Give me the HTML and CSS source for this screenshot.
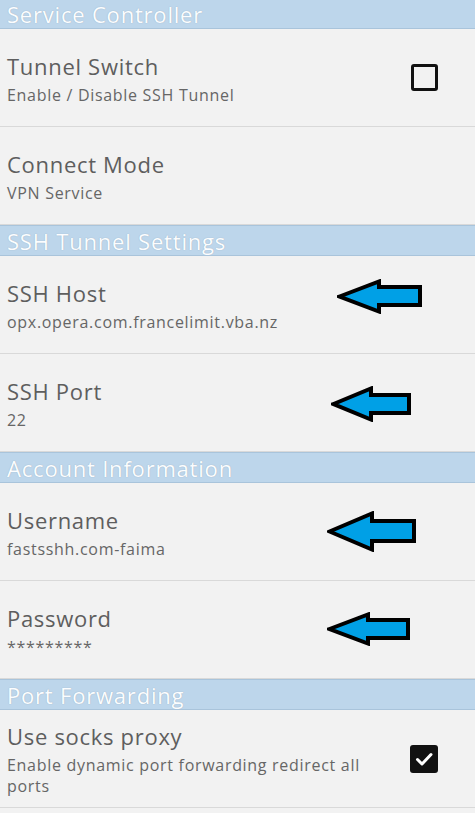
FILE: index.html
```html
<!DOCTYPE html>
<html>
<head>
<meta charset="utf-8">
<link rel="stylesheet" href="styles.css">
</head>
<body>
<div class="list">
  <div class="cat first">Service Controller</div>
  <div class="row">
    <div class="texts">
      <div class="title">Tunnel Switch</div>
      <div class="summary">Enable / Disable SSH Tunnel</div>
    </div>
    <div class="check"></div>
  </div>
  <div class="row">
    <div class="texts">
      <div class="title">Connect Mode</div>
      <div class="summary">VPN Service</div>
    </div>
  </div>
  <div class="cat">SSH Tunnel Settings</div>
  <div class="row">
    <div class="texts">
      <div class="title">SSH Host</div>
      <div class="summary">opx.opera.com.francelimit.vba.nz</div>
    </div>
    <svg class="arrow a-host" viewBox="0 0 85 35" width="85" height="35"><polygon points="2.5,17.5 42,2.5 42,8 83,8 83,26 42,26 42,32.5" fill="#00a0e6" stroke="#000" stroke-width="4" stroke-linejoin="miter"/></svg>
  </div>
  <div class="row">
    <div class="texts">
      <div class="title">SSH Port</div>
      <div class="summary">22</div>
    </div>
    <svg class="arrow a-port" viewBox="0 0 80 36" width="80" height="36"><polygon points="2.5,18 40,2.5 40,9 78,9 78,27 40,27 40,33.5" fill="#00a0e6" stroke="#000" stroke-width="4" stroke-linejoin="miter"/></svg>
  </div>
  <div class="cat">Account Information</div>
  <div class="row">
    <div class="texts">
      <div class="title">Username</div>
      <div class="summary">fastsshh.com-faima</div>
    </div>
    <svg class="arrow a-user" viewBox="0 0 89 41" width="89" height="41"><polygon points="2.5,20.5 45,2.5 45,10 87,10 87,30 45,30 45,38.5" fill="#00a0e6" stroke="#000" stroke-width="4" stroke-linejoin="miter"/></svg>
  </div>
  <div class="row">
    <div class="texts">
      <div class="title">Password</div>
      <div class="summary">*********</div>
    </div>
    <svg class="arrow a-pass" viewBox="0 0 83 34" width="83" height="34"><polygon points="2.5,17 41,2.5 41,8 81,8 81,26 41,26 41,31.5" fill="#00a0e6" stroke="#000" stroke-width="4" stroke-linejoin="miter"/></svg>
  </div>
  <div class="cat">Port Forwarding</div>
  <div class="row">
    <div class="texts">
      <div class="title">Use socks proxy</div>
      <div class="summary">Enable dynamic port forwarding redirect all ports</div>
    </div>
    <div class="check on"><svg viewBox="0 0 28 28" width="28" height="28"><path d="M7.5 14.5 L12 19 L21 9.5" fill="none" stroke="#fff" stroke-width="3" stroke-linecap="round" stroke-linejoin="round"/></svg></div>
  </div>
</div>
</body>
</html>
```
FILE: styles.css
```css
html, body {
  margin: 0;
  padding: 0;
  background: #f2f2f2;
  overflow: hidden;
}
body {
  width: 475px;
  height: 813px;
  font-family: "Open Sans", "Noto Sans", sans-serif;
}
.list {
  display: flex;
  flex-direction: column;
  margin-top: -2px;
}
.cat {
  height: 29px;
  box-sizing: content-box;
  background: #bdd6eb;
  border-top: 1px solid #a9c4db;
  border-bottom: 1px solid #a9c4db;
  color: #fbfdff;
  font-size: 22px;
  line-height: 31px;
  padding-left: 7px;
  letter-spacing: 0.8px;
  text-shadow: 0 0 1px #8da3b6;
  overflow: hidden;
  white-space: nowrap;
}
.row {
  position: relative;
  height: 97px;
  border-bottom: 1px solid #d9d9d9;
  display: flex;
  align-items: center;
  padding: 0 37px 0 7px;
}
.texts {
  flex: 1;
  display: flex;
  flex-direction: column;
  padding-top: 1px;
}
.title {
  color: #5e5e5e;
  font-size: 22px;
  line-height: 30px;
  letter-spacing: 0.7px;
  margin-bottom: 4px;
}
.summary {
  color: #666666;
  font-size: 16px;
  line-height: 21px;
  letter-spacing: 0.7px;
  padding-right: 20px;
}
.check {
  width: 21px;
  height: 21px;
  border: 3px solid #111;
  border-radius: 3px;
  flex: none;
}
.check.on {
  width: 28px;
  height: 28px;
  border: none;
  background: #111;
  border-radius: 3px;
}
.check.on svg {
  display: block;
}
.arrow {
  position: absolute;
  display: block;
}
.a-host { left: 337px; top: 23px; }
.a-port { left: 331px; top: 32px; }
.a-user { left: 327px; top: 28px; }
.a-pass { left: 327px; top: 31px; }
```
